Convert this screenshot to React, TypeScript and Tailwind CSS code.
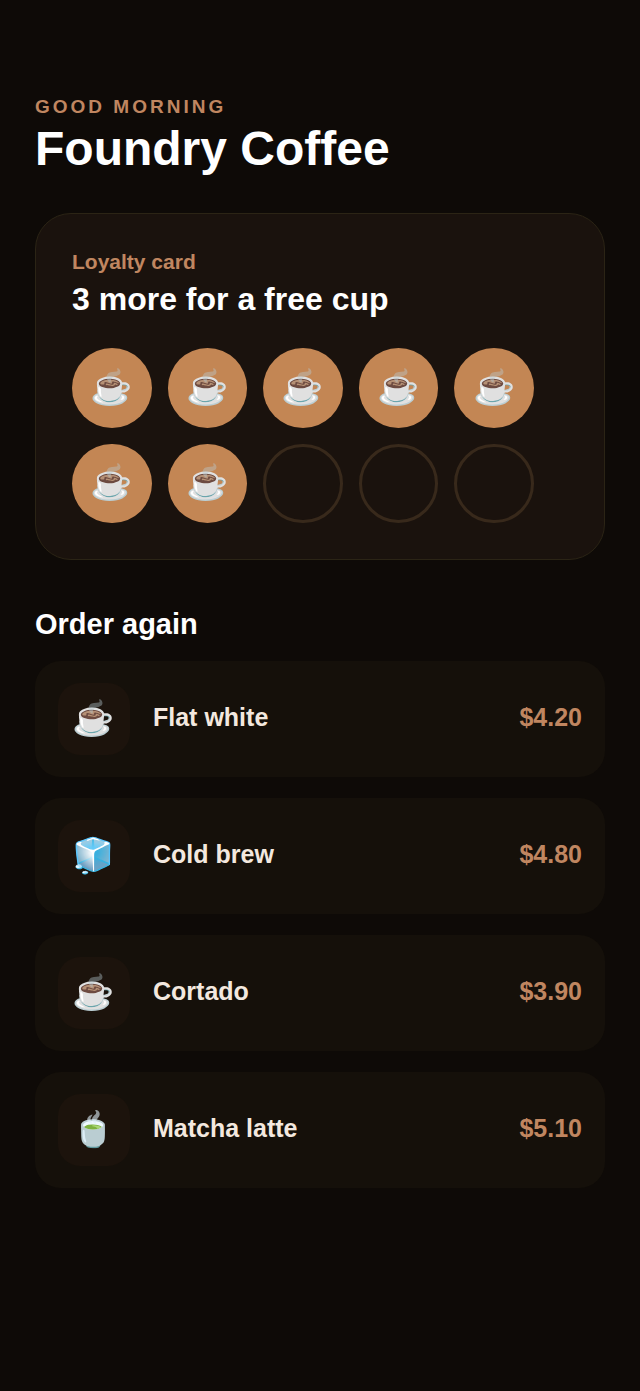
import React from 'react';

const TOTAL_STAMPS = 10;
const EARNED_STAMPS = 7;

const drinks = [
  { name: "Flat white", icon: "☕", price: "$4.20" },
  { name: "Cold brew", icon: "🧊", price: "$4.80" },
  { name: "Cortado", icon: "☕", price: "$3.90" },
  { name: "Matcha latte", icon: "🍵", price: "$5.10" }
];

const LoyaltyCard = () => {
  const stamps = Array.from({ length: TOTAL_STAMPS }, (_, index) => index < EARNED_STAMPS);

  return (
    <section className="rounded-[36px] border border-[#2b2415] bg-[#1a120d] p-9">
      <p className="text-[21px] leading-6 font-bold text-[#c08660]">Loyalty card</p>
      <h2 className="mt-1 text-[32px] leading-[42px] font-bold text-white">
        {TOTAL_STAMPS - EARNED_STAMPS} more for a free cup
      </h2>
      <div className="mt-7 grid max-w-[462px] grid-cols-5 gap-4">
        {stamps.map((earned, index) => (
          <div
            key={index}
            className={
              earned
                ? "flex aspect-square items-center justify-center rounded-full bg-[#c38654] pb-0.5 text-[34px] leading-none"
                : "aspect-square rounded-full border-3 border-[#38291b]"
            }
          >
            {earned && "☕"}
          </div>
        ))}
      </div>
    </section>
  );
};

const App = () => {
  return (
    <div className="min-h-screen bg-[#0e0a07] px-[35px] pt-[94px] pb-16 font-['Liberation_Sans',Arial,'Noto_Color_Emoji',sans-serif]">
      <header>
        <p className="text-[19px] leading-[26px] font-bold tracking-[3px] text-[#c08660] uppercase">Good morning</p>
        <h1 className="mt-px text-[48px] leading-[56px] font-bold text-white">Foundry Coffee</h1>
      </header>

      <main className="mt-9">
        <LoyaltyCard />

        <section className="mt-12">
          <h2 className="text-[29px] leading-8 font-bold text-white">Order again</h2>
          <ul className="mt-[21px] space-y-[21px]">
            {drinks.map((drink) => (
              <li key={drink.name} className="flex items-center gap-[23px] rounded-[26px] bg-[#15100a] px-[23px] py-[22px]">
                <span className="flex size-[72px] items-center justify-center rounded-[22px] bg-[#1c130c] pb-0.5 text-[34px] leading-none">
                  {drink.icon}
                </span>
                <span className="flex-1 pb-1 text-[25px] leading-8 font-bold text-[#f3e8df]">{drink.name}</span>
                <span className="pb-1 text-[25px] leading-8 font-bold text-[#c08660]">{drink.price}</span>
              </li>
            ))}
          </ul>
        </section>
      </main>
    </div>
  );
};

export default App;
